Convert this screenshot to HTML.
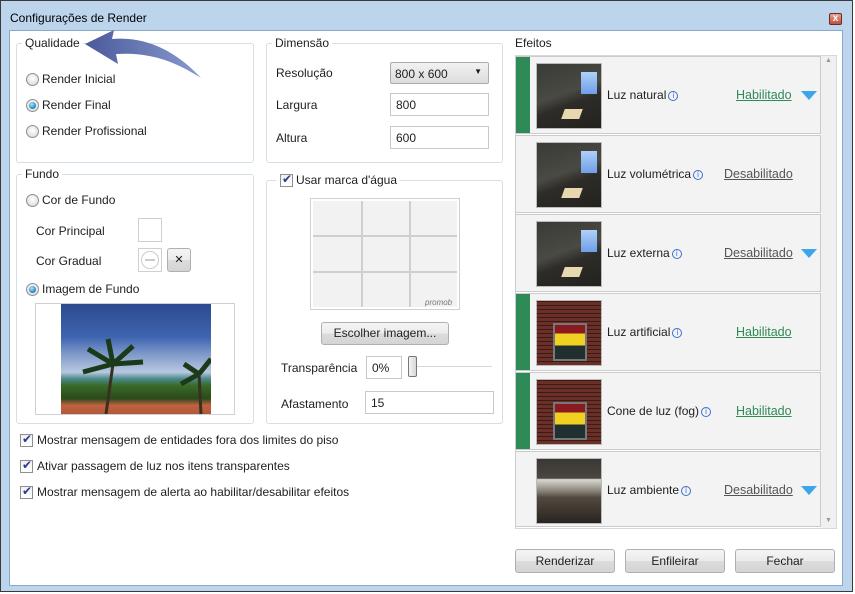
<!DOCTYPE html><html><head><meta charset="utf-8"><style>
*{box-sizing:border-box;margin:0;padding:0}
body{width:855px;height:594px;overflow:hidden;background:#fff;font-family:"Liberation Sans",sans-serif;font-size:12px;color:#1e1e1e;position:relative}
.a{position:absolute}
.win{left:0;top:0;width:853px;height:592px;border:1px solid #3a3a3a;background:#bcd4ec}
.client{left:9px;top:30px;width:834px;height:556px;background:#fff;border:1px solid #8aa8c8}
.gb{position:absolute;border:1px solid #d5dfe5;border-radius:3px}
.lg{position:absolute;background:#fff;padding:0 3px;white-space:nowrap}
.t{position:absolute;white-space:nowrap}
.rad{position:absolute;width:13px;height:13px;border-radius:50%;border:1px solid #8e8f8f;background:radial-gradient(circle at 50% 40%,#fff,#d4d4d4)}
.rad.on::after{content:"";position:absolute;left:2px;top:2px;width:7px;height:7px;border-radius:50%;background:radial-gradient(circle at 40% 35%,#aee6ff,#1d7fb8 70%,#0d4f78)}
.inp{position:absolute;border:1px solid #c9c9c9;background:#fff;padding:4px 0 0 5px;height:23px}
.cb{position:absolute;width:13px;height:13px;border:1px solid #8e8f8f;background:linear-gradient(#f0f0f0,#fff)}
.cb::after{content:"✔";position:absolute;left:1px;top:-3px;font-size:12px;color:#2a3a8a}
.btn{position:absolute;border:1px solid #b0b0b0;border-radius:3px;background:linear-gradient(#f5f5f5 0%,#ebebeb 50%,#dcdcdc 51%,#d4d4d4 100%);text-align:center;color:#1e1e1e}
.item{position:absolute;left:515px;width:306px;height:78px;background:#f3f3f3;border:1px solid #cbcbcb}
.bar{position:absolute;left:0;top:0;width:14px;height:76px;background:#2e8a57}
.th{position:absolute;left:20px;top:6px;width:66px;height:66px;border:1px solid #bbb;overflow:hidden}
.room{background:linear-gradient(160deg,#3a3a36 0%,#4a4a44 45%,#2e2c28 60%,#24221e 100%)}
.room::before{content:"";position:absolute;left:44px;top:8px;width:16px;height:22px;background:linear-gradient(#b0d0f8,#6d9fe8);}
.room::after{content:"";position:absolute;left:26px;top:45px;width:18px;height:10px;background:#e8d8b0;transform:skewX(-20deg)}
.brick{background:repeating-linear-gradient(0deg,#6a3028 0 3px,#3a1a16 3px 4px)}
.pic{position:absolute;left:16px;top:22px;width:34px;height:38px;border:2px solid #777;background:linear-gradient(#8a1a20 0 25%,#f0d020 25% 60%,#203030 60%)}
.nm{position:absolute;left:91px;top:31px}
.nm i{font-style:normal;color:#3a6fd0;border:1px solid #3a6fd0;border-radius:50%;display:inline-block;width:10px;height:10px;line-height:8px;text-align:center;margin-left:2px;vertical-align:1px;font-size:8px}
.st{position:absolute;top:31px;text-decoration:underline;font-size:12.5px}
.hab{left:220px;color:#2e8a57}
.des{left:208px;color:#555}
.tri{position:absolute;left:285px;top:34px;width:0;height:0;border-left:8px solid transparent;border-right:8px solid transparent;border-top:9px solid #3ba6e8}
</style></head><body>
<div class="a win"></div>
<div class="t" style="left:10px;top:11px;font-size:12px;color:#000">Configurações de Render</div>
<div class="a" style="left:829px;top:13px;width:13px;height:12px;border:1px solid #6a2a2a;background:linear-gradient(#e8a090,#c05040);border-radius:2px;color:#fff;font-size:10px;line-height:10px;text-align:center;font-weight:bold">x</div>
<div class="a client"></div>

<div class="gb" style="left:16px;top:43px;width:238px;height:120px"></div>
<div class="lg" style="left:22px;top:36px">Qualidade</div>
<div class="rad" style="left:26px;top:73px"></div><div class="t" style="left:42px;top:72px">Render Inicial</div>
<div class="rad on" style="left:26px;top:99px"></div><div class="t" style="left:42px;top:98px">Render Final</div>
<div class="rad" style="left:26px;top:125px"></div><div class="t" style="left:42px;top:124px">Render Profissional</div>
<svg class="a" style="left:78px;top:28px" width="130" height="55"><defs><linearGradient id="g" x1="0" x2="1"><stop offset="0" stop-color="#4a5a9a"/><stop offset="1" stop-color="#8a9ad0"/></linearGradient></defs><path d="M7 16 L36 2 L34 11 C70 8 100 25 123 50 C95 32 70 24 38 26 L40 36 Z" fill="url(#g)"/></svg>

<div class="gb" style="left:266px;top:43px;width:237px;height:120px"></div>
<div class="lg" style="left:272px;top:36px">Dimensão</div>
<div class="t" style="left:276px;top:66px">Resolução</div>
<div class="a" style="left:390px;top:62px;width:99px;height:22px;border:1px solid #acacac;border-radius:2px;background:linear-gradient(#f2f2f2,#dcdcdc);padding:4px 0 0 4px">800 x 600<span style="position:absolute;right:6px;top:4px;font-size:8px">▼</span></div>
<div class="t" style="left:276px;top:98px">Largura</div>
<div class="inp" style="left:390px;top:93px;width:99px">800</div>
<div class="t" style="left:276px;top:131px">Altura</div>
<div class="inp" style="left:390px;top:126px;width:99px">600</div>

<div class="gb" style="left:16px;top:174px;width:238px;height:250px"></div>
<div class="lg" style="left:22px;top:167px">Fundo</div>
<div class="rad" style="left:26px;top:194px"></div><div class="t" style="left:42px;top:193px">Cor de Fundo</div>
<div class="t" style="left:36px;top:224px">Cor Principal</div>
<div class="a" style="left:138px;top:218px;width:24px;height:24px;border:1px solid #cfcfcf"></div>
<div class="t" style="left:36px;top:254px">Cor Gradual</div>
<div class="a" style="left:138px;top:248px;width:24px;height:24px;border:1px solid #cfcfcf"><div class="a" style="left:2px;top:2px;width:18px;height:18px;border-radius:50%;border:1px solid #ccc"></div><div class="a" style="left:6px;top:10px;width:10px;height:2px;background:#ccc"></div></div>
<div class="btn" style="left:167px;top:248px;width:24px;height:24px;line-height:22px;font-size:11px">✕</div>
<div class="rad on" style="left:26px;top:283px"></div><div class="t" style="left:42px;top:282px">Imagem de Fundo</div>
<div class="a" style="left:35px;top:303px;width:200px;height:112px;border:1px solid #d0d0d0"></div>
<div class="a" style="left:61px;top:304px;width:150px;height:110px;background:linear-gradient(#2c4a8e 0%,#3e64b0 30%,#7c98c8 45%,#b8c8e0 62%,#4a8a8a 68%,#3a6a2a 74%,#2a4a1a 86%,#c06040 92%,#b05a3a 100%)"></div>
<svg class="a" style="left:61px;top:304px" width="150" height="110"><path d="M45 110 L52 60" stroke="#3a3020" stroke-width="3"/><path d="M52 60 l-25 -15 M52 60 l20 -18 M52 60 l30 -2 M52 60 l-30 8 M52 60 l-5 -25" stroke="#1a3a1a" stroke-width="5"/><path d="M140 110 L138 70" stroke="#3a3020" stroke-width="3"/><path d="M138 70 l-15 -10 M138 70 l12 -15 M138 70 l-18 10" stroke="#1a3a1a" stroke-width="5"/></svg>

<div class="gb" style="left:266px;top:180px;width:237px;height:244px"></div>
<div class="lg" style="left:276px;top:173px;padding-left:3px"><span style="display:inline-block;width:17px"></span>Usar marca d'água</div>
<div class="cb" style="left:280px;top:174px"></div>
<div class="a" style="left:310px;top:198px;width:150px;height:112px;border:1px solid #d0d0d0;padding:2px"><svg width="144" height="106"><rect width="144" height="106" fill="#f2f2f2"/><path d="M49 0V106M97 0V106M0 35H144M0 71H144" stroke="#cfcfcf" stroke-width="2"/><text x="112" y="104" font-size="8" font-style="italic" fill="#777" font-family="Liberation Sans">promob</text></svg></div>
<div class="btn" style="left:321px;top:322px;width:128px;height:23px;line-height:21px">Escolher imagem...</div>
<div class="t" style="left:281px;top:361px">Transparência</div>
<div class="inp" style="left:366px;top:356px;width:36px">0%</div>
<div class="a" style="left:412px;top:366px;width:80px;height:2px;background:#d8d8d8;border-bottom:1px solid #fff"></div>
<div class="a" style="left:408px;top:356px;width:9px;height:21px;border:1px solid #777;border-radius:2px;background:linear-gradient(90deg,#f4f4f4,#d8d8d8)"></div>
<div class="t" style="left:281px;top:397px">Afastamento</div>
<div class="inp" style="left:365px;top:391px;width:129px">15</div>

<div class="cb" style="left:20px;top:434px"></div><div class="t" style="left:37px;top:433px">Mostrar mensagem de entidades fora dos limites do piso</div>
<div class="cb" style="left:20px;top:460px"></div><div class="t" style="left:37px;top:459px">Ativar passagem de luz nos itens transparentes</div>
<div class="cb" style="left:20px;top:486px"></div><div class="t" style="left:37px;top:485px">Mostrar mensagem de alerta ao habilitar/desabilitar efeitos</div>

<div class="t" style="left:515px;top:36px">Efeitos</div>
<div class="a" style="left:515px;top:55px;width:322px;height:474px;border:1px solid #d8d8d8;background:#fff"></div>
<div class="a" style="left:821px;top:56px;width:15px;height:472px;background:#f0f0f0"></div>
<div class="t" style="left:825px;top:57px;font-size:7px;color:#999">▲</div>
<div class="t" style="left:825px;top:517px;font-size:7px;color:#999">▼</div>

<div class="item" style="top:56px"><div class="bar"></div><div class="th room"></div><div class="nm">Luz natural<i>i</i></div><div class="st hab">Habilitado</div><div class="tri"></div></div>
<div class="item" style="top:135px"><div class="th room"></div><div class="nm">Luz volumétrica<i>i</i></div><div class="st des">Desabilitado</div></div>
<div class="item" style="top:214px"><div class="th room"></div><div class="nm">Luz externa<i>i</i></div><div class="st des">Desabilitado</div><div class="tri"></div></div>
<div class="item" style="top:293px"><div class="bar"></div><div class="th brick"><div class="pic"></div></div><div class="nm">Luz artificial<i>i</i></div><div class="st hab">Habilitado</div></div>
<div class="item" style="top:372px"><div class="bar"></div><div class="th brick"><div class="pic"></div></div><div class="nm">Cone de luz (fog)<i>i</i></div><div class="st hab">Habilitado</div></div>
<div class="item" style="top:451px;height:76px"><div class="th" style="background:linear-gradient(#3a3834,#4a4640 30%,#d8d8d0 32%,#8a8478 50%,#504a40 60%,#2a2420)"></div><div class="nm">Luz ambiente<i>i</i></div><div class="st des">Desabilitado</div><div class="tri"></div></div>

<div class="btn" style="left:515px;top:549px;width:100px;height:24px;line-height:23px">Renderizar</div>
<div class="btn" style="left:625px;top:549px;width:100px;height:24px;line-height:23px">Enfileirar</div>
<div class="btn" style="left:735px;top:549px;width:100px;height:24px;line-height:23px">Fechar</div>
</body></html>
